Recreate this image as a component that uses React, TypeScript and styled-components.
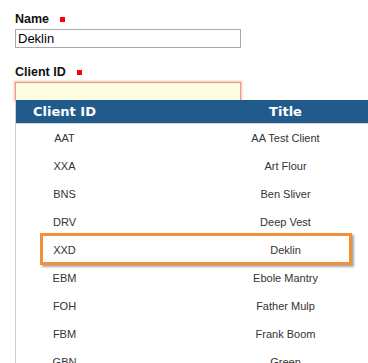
import React from 'react';
import styled, { createGlobalStyle } from 'styled-components';

const GlobalStyle = createGlobalStyle`
  html, body {
    margin: 0;
    padding: 0;
    background: #fff;
    overflow: hidden;
  }
  body {
    font-family: "Liberation Sans", Arial, sans-serif;
    width: 368px;
    height: 363px;
  }
`;

const Form = styled.div`
  padding: 11px 0 0 15px;
  display: flex;
  flex-direction: column;
`;

const Field = styled.div`
  display: flex;
  flex-direction: column;
  margin-bottom: 16px;
`;

const Label = styled.label`
  font-size: 12.5px;
  font-weight: bold;
  line-height: 16px;
  color: #111;
  margin-bottom: 2px;
`;

const Required = styled.span`
  display: inline-block;
  width: 5px;
  height: 5px;
  background: #ff0000;
  margin-left: 11px;
  margin-bottom: 1px;
`;

const TextInput = styled.div<{ $focused?: boolean }>`
  box-sizing: border-box;
  width: 226px;
  height: 19px;
  padding: 0 2px;
  font-size: 13px;
  line-height: 17px;
  color: #000;
  border: 1px solid ${(p) => (p.$focused ? '#e89c86' : '#a9a9a9')};
  background: ${(p) => (p.$focused ? '#fffde1' : '#fff')};
  box-shadow: ${(p) => (p.$focused ? '0 0 2px 1px #f6bfae' : 'none')};
`;

const Combo = styled.div`
  position: relative;
`;

const Dropdown = styled.div`
  position: absolute;
  top: 18px;
  left: 0;
  width: 443px;
  background: #fff;
  border-left: 1px solid #cfcfcf;
  z-index: 5;
`;

const Grid = styled.div`
  display: grid;
  grid-template-columns: 97px 345px;
`;

const Header = styled(Grid)`
  height: 23px;
  background: #215b8c;
  border-bottom: 1px solid #d4d4d4;
  color: #fff;
  font-family: "DejaVu Sans", Verdana, sans-serif;
  font-weight: bold;
  font-size: 13px;
  align-items: center;
  text-align: center;
`;

const Row = styled(Grid)<{ $selected?: boolean }>`
  position: relative;
  height: 28px;
  align-items: center;
  text-align: center;
  font-size: 11px;
  color: #333;

  ${(p) =>
    p.$selected &&
    `
    &::after {
      content: '';
      position: absolute;
      top: -3px;
      left: 24px;
      width: 312px;
      height: 32px;
      box-sizing: border-box;
      border: 3px solid #f0913a;
      box-shadow: 2px 2px 2px rgba(0, 0, 0, 0.35);
    }
  `}
`;

const clients = [
  { id: 'AAT', title: 'AA Test Client' },
  { id: 'XXA', title: 'Art Flour' },
  { id: 'BNS', title: 'Ben Sliver' },
  { id: 'DRV', title: 'Deep Vest' },
  { id: 'XXD', title: 'Deklin' },
  { id: 'EBM', title: 'Ebole Mantry' },
  { id: 'FOH', title: 'Father Mulp' },
  { id: 'FBM', title: 'Frank Boom' },
  { id: 'GBN', title: 'Green' },
];

const App: React.FC = () => {
  return (
    <>
      <GlobalStyle />
      <Form>
        <Field>
          <Label>
            Name
            <Required />
          </Label>
          <TextInput>Deklin</TextInput>
        </Field>
        <Field>
          <Label>
            Client ID
            <Required />
          </Label>
          <Combo>
            <TextInput $focused />
            <Dropdown>
              <Header>
                <span>Client ID</span>
                <span>Title</span>
              </Header>
              {clients.map((c) => (
                <Row key={c.id} $selected={c.id === 'XXD'}>
                  <span>{c.id}</span>
                  <span>{c.title}</span>
                </Row>
              ))}
            </Dropdown>
          </Combo>
        </Field>
      </Form>
    </>
  );
};

export default App;
